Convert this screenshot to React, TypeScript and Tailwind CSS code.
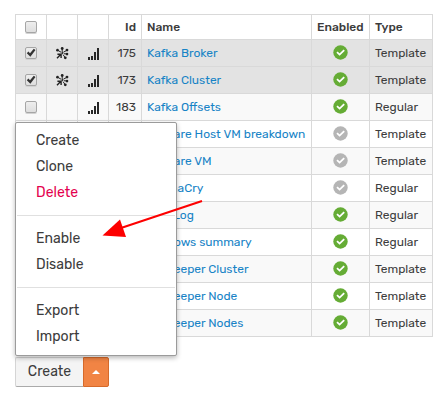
import React from "react";

type Row = {
  id?: number;
  name: string;
  enabled: boolean;
  type: "Template" | "Regular";
  selected?: boolean;
  linked?: boolean;
};

const rows: Row[] = [
  { id: 175, name: "Kafka Broker", enabled: true, type: "Template", selected: true, linked: true },
  { id: 173, name: "Kafka Cluster", enabled: true, type: "Template", selected: true, linked: true },
  { id: 183, name: "Kafka Offsets", enabled: true, type: "Regular" },
  { name: "VMware Host VM breakdown", enabled: false, type: "Template" },
  { name: "VMware VM", enabled: false, type: "Template" },
  { name: "WannaCry", enabled: false, type: "Regular" },
  { name: "Web Log", enabled: true, type: "Regular" },
  { name: "Windows summary", enabled: true, type: "Regular" },
  { name: "Zookeeper Cluster", enabled: true, type: "Template" },
  { name: "Zookeeper Node", enabled: true, type: "Template" },
  { name: "Zookeeper Nodes", enabled: true, type: "Template" },
];

const columns = "grid grid-cols-[31px_31px_31px_33px_170px_58px_63px]";
const cell = "flex border-r border-b border-[#d9d9d9]";

function Checkbox({ checked }: { checked?: boolean }) {
  return (
    <span className="flex size-3 shrink-0 rounded-[2px] border border-[#a6a6a6] bg-linear-to-b from-[#eeeeee] to-[#dedede] shadow-[0_1px_0_#d2d2d2]">
      {checked && (
        <svg viewBox="0 0 10 10" className="size-[10px]">
          <path d="M0.8 5.2 2.4 3.6 4 5.2 7.8 0.8 9.5 2.1 4.4 8.8Z" fill="#333" />
        </svg>
      )}
    </span>
  );
}

function ClusterIcon() {
  return (
    <svg width="13" height="13" viewBox="0 0 13 13" fill="#222" stroke="#222">
      <path d="M6.2 5.2V2M5 5.2 2.3 3.6M7.4 5.2 10.4 3.6M7.8 6.7 11 7M7 7.6 9 10.4" fill="none" strokeWidth="1" />
      <path d="M4.6 7.6 1 11.2M1.4 7.2h3.7v3.7" fill="none" strokeWidth="1.4" />
      <g stroke="none">
        <circle cx="6.2" cy="1.5" r="1.4" />
        <circle cx="1.5" cy="3.2" r="1.35" />
        <circle cx="11" cy="3.1" r="1.4" />
        <circle cx="11" cy="7.1" r="1.3" />
        <circle cx="9.3" cy="10.8" r="1.4" />
        <circle cx="6.3" cy="6" r="0.9" />
      </g>
    </svg>
  );
}

function BarsIcon() {
  return (
    <svg width="11" height="12" viewBox="0 0 11 12" fill="#272727" shapeRendering="crispEdges">
      <path d="M0 9h2v3H0zM3 8h2v4H3zM6 4h2v8H6zM9 0h2v12H9z" />
    </svg>
  );
}

function Status({ on }: { on: boolean }) {
  return (
    <svg width="15" height="15" viewBox="0 0 15 15">
      <circle cx="7.5" cy="7.5" r="7.2" fill={on ? "#65ac35" : "#b5b5b5"} />
      <path d="m4 7.2 2.6 2.4 4.6-4.5" fill="none" stroke="#fff" strokeWidth="1.8" />
    </svg>
  );
}

function MenuItem({ label, danger }: { label: string; danger?: boolean }) {
  return (
    <div className={`flex h-[26px] items-center pl-5 ${danger ? "text-[#e4004e]" : ""}`}>
      {label}
    </div>
  );
}

export default function App() {
  return (
    <div className="h-[403px] w-[433px] overflow-hidden bg-white pt-[14px] pl-[15px] font-['Rubik','Roboto',sans-serif] text-[12px] text-[#3c3c3c]">
      <div className="relative w-[418px]">
        <div className="border-t border-l border-[#d9d9d9]">
          <div className={`${columns} h-[25px] font-medium`}>
            <div className={`${cell} items-center justify-center`}><Checkbox /></div>
            <div className={cell} />
            <div className={cell} />
            <div className={`${cell} items-center justify-end pr-[5px]`}>Id</div>
            <div className={`${cell} items-center pl-[5px]`}>Name</div>
            <div className={`${cell} items-center pl-[5px]`}>Enabled</div>
            <div className={`${cell} items-center pl-[5px]`}>Type</div>
          </div>
          {rows.map((row, i) => (
            <div
              key={row.name}
              className={`${columns} h-[27px] ${row.selected ? "bg-[#e3e3e3]" : i % 2 === 0 ? "bg-[#f9f9f9]" : "bg-white"}`}
            >
              <div className={`${cell} items-center justify-center`}><Checkbox checked={row.selected} /></div>
              <div className={`${cell} items-start pt-[7px] pl-[9px]`}>{row.linked && <ClusterIcon />}</div>
              <div className={`${cell} items-start pt-[8px] pl-[10px]`}><BarsIcon /></div>
              <div className={`${cell} items-center justify-end pr-[5px]`}>{row.id}</div>
              <div className={`${cell} items-center pl-[5px] whitespace-nowrap text-[#1783c6]`}>{row.name}</div>
              <div className={`${cell} items-start justify-center pt-[5px]`}><Status on={row.enabled} /></div>
              <div className={`${cell} items-center pl-[5px]`}>{row.type}</div>
            </div>
          ))}
        </div>

        <div className="absolute top-[108px] left-0 h-[234px] w-[162px] rounded-[2px] border border-[#9b9b9b] bg-white pt-[4px] text-[14px] shadow-[0_2px_5px_rgba(0,0,0,0.28)]">
          <MenuItem label="Create" />
          <MenuItem label="Clone" />
          <MenuItem label="Delete" danger />
          <div className="mx-px mt-[10px] mb-[9px] h-px bg-[#e0e0e0]" />
          <MenuItem label="Enable" />
          <MenuItem label="Disable" />
          <div className="mx-px mt-[10px] mb-[9px] h-px bg-[#e0e0e0]" />
          <MenuItem label="Export" />
          <MenuItem label="Import" />
        </div>

        <svg className="absolute top-[180px] left-[85px]" width="105" height="50" viewBox="100 194 105 50">
          <path d="M202 201 118 229" stroke="#fd0000" strokeWidth="1.9" />
          <path d="M102.500 235.500 120 219.500 126 237Z" fill="#fd0000" />
        </svg>
      </div>

      <div className="mt-5 flex h-[30px] text-[14px]">
        <div className="flex w-[68px] items-center justify-center rounded-l-[2px] border border-r-0 border-[#d5d5d5] border-b-[#aaa] bg-[#f4f4f4] pb-px">
          Create
        </div>
        <div className="flex w-[26px] items-center justify-center rounded-r-[2px] border border-[#d66a2b] bg-[#f18444]">
          <svg width="8" height="4" viewBox="0 0 8 4"><path d="m0 4 4-4 4 4Z" fill="#fff" /></svg>
        </div>
      </div>
    </div>
  );
}
